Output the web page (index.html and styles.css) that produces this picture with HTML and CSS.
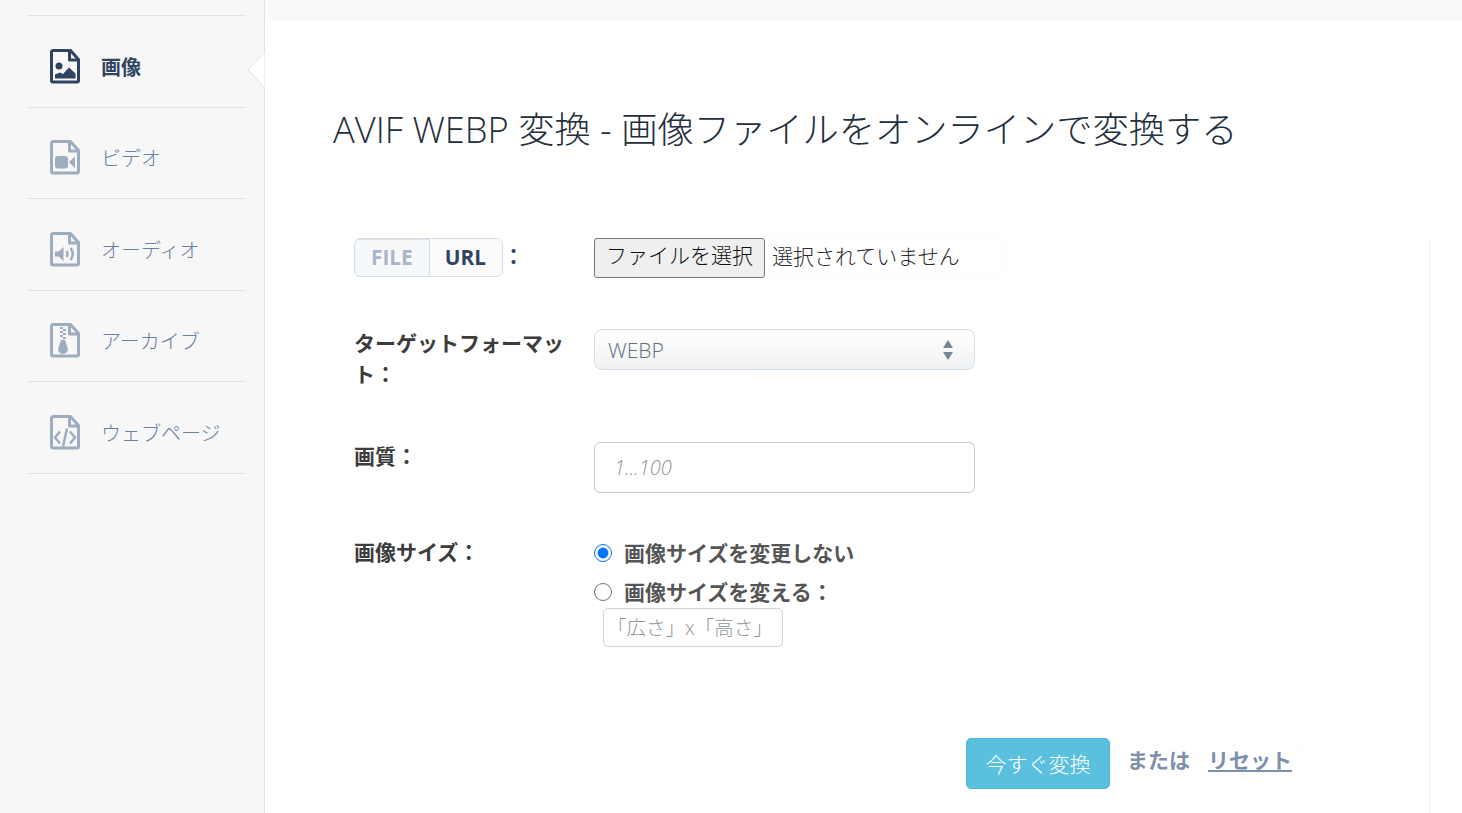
FILE: index.html
```html
<!DOCTYPE html>
<html lang="ja">
<head>
    <meta charset="UTF-8">
    <title>AVIF WEBP 変換</title>
    <link rel="stylesheet" href="styles.css">
</head>
<body>
    <aside class="sidebar">
        <nav class="side-nav">
            <a class="nav-item active" href="#">
                <svg class="nav-icon" viewBox="0 0 30 35">
                    <path class="doc" d="M1.500 3a1.500 1.500 0 0 1 1.500-1.500h17.500l8 9v21a1.500 1.500 0 0 1-1.500 1.500H3a1.500 1.500 0 0 1-1.500-1.500z"/>
                    <path class="fold" d="M19.500 1.500v9.500h9"/>
                    <circle class="fill" cx="9" cy="17" r="3.500"/>
                    <path class="fill" d="M5 29.500v-4l5-2 3 1.500 6-6.500 6.500 6v5z"/>
                </svg>
                <span>画像</span>
                <svg class="nav-notch" viewBox="0 0 18 36">
                    <path d="M18 0L1 18l17 18z"/>
                </svg>
            </a>
            <a class="nav-item" href="#">
                <svg class="nav-icon" viewBox="0 0 30 35">
                    <path class="doc" d="M1.500 3a1.500 1.500 0 0 1 1.500-1.500h17.500l8 9v21a1.500 1.500 0 0 1-1.500 1.500H3a1.500 1.500 0 0 1-1.500-1.500z"/>
                    <path class="fold" d="M19.500 1.500v9.500h9"/>
                    <rect class="fill" x="5" y="16" width="13" height="12.500" rx="3"/>
                    <path class="fill" d="M19 22l6-5.500v12z"/>
                </svg>
                <span>ビデオ</span>
            </a>
            <a class="nav-item" href="#">
                <svg class="nav-icon" viewBox="0 0 30 35">
                    <path class="doc" d="M1.500 3a1.500 1.500 0 0 1 1.500-1.500h17.500l8 9v21a1.500 1.500 0 0 1-1.500 1.500H3a1.500 1.500 0 0 1-1.500-1.500z"/>
                    <path class="fold" d="M19.500 1.500v9.500h9"/>
                    <path class="fill" d="M5 19.500h3.500l5-4.500v14l-5-4.500H5z"/>
                    <path class="wave" d="M16.500 19q2 3 0 6M20.500 16q4.500 6 0 12"/>
                </svg>
                <span>オーディオ</span>
            </a>
            <a class="nav-item" href="#">
                <svg class="nav-icon" viewBox="0 0 30 35">
                    <path class="doc" d="M1.500 3a1.500 1.500 0 0 1 1.500-1.500h17.500l8 9v21a1.500 1.500 0 0 1-1.500 1.500H3a1.500 1.500 0 0 1-1.500-1.500z"/>
                    <path class="fold" d="M19.500 1.500v9.500h9"/>
                    <path class="fill" d="M10 4h3v2h-3zM13 6h3v2h-3zM10 8h3v2h-3zM13 10h3v2h-3zM10 12h3v2h-3zM13 14h3v2h-3zM11 17h4l3 9a5 5 0 1 1-10 0z"/>
                </svg>
                <span>アーカイブ</span>
            </a>
            <a class="nav-item" href="#">
                <svg class="nav-icon" viewBox="0 0 30 35">
                    <path class="doc" d="M1.500 3a1.500 1.500 0 0 1 1.500-1.500h17.500l8 9v21a1.500 1.500 0 0 1-1.500 1.500H3a1.500 1.500 0 0 1-1.500-1.500z"/>
                    <path class="fold" d="M19.500 1.500v9.500h9"/>
                    <path class="wave" d="M10 16.500l-5 6 5 6M20 16.500l5 6-5 6M17 13.500l-4 18"/>
                </svg>
                <span>ウェブページ</span>
            </a>
        </nav>
    </aside>

    <main class="main">
        <div class="top-strip"></div>
        <h1 class="page-title">AVIF WEBP 変換 - 画像ファイルをオンラインで変換する</h1>

        <form class="convert-form">
            <div class="form-row row-file">
                <div class="form-label source-label">
                    <div class="source-tabs">
                        <span class="source-tab tab-file">FILE</span>
                        <span class="source-tab tab-url">URL</span>
                    </div>
                    <span class="source-colon">：</span>
                </div>
                <div class="file-box">
                    <button type="button" class="file-button">ファイルを選択</button>
                    <span class="file-name">選択されていません</span>
                </div>
            </div>

            <div class="form-row row-format">
                <label class="form-label">ターゲットフォーマット：</label>
                <div class="select-wrap">
                    <select class="format-select">
                        <option>WEBP</option>
                    </select>
                    <svg class="select-arrows" viewBox="0 0 10 20">
                        <path d="M5 0l5 8H0zM0 12h10l-5 8z"/>
                    </svg>
                </div>
            </div>

            <div class="form-row row-quality">
                <label class="form-label">画質：</label>
                <input class="quality-input" type="text" placeholder="1...100">
            </div>

            <div class="form-row row-size">
                <label class="form-label">画像サイズ：</label>
                <div class="size-options">
                    <label class="radio-line"><input type="radio" name="size" checked>画像サイズを変更しない</label>
                    <label class="radio-line"><input type="radio" name="size">画像サイズを変える：</label>
                    <input class="size-input" type="text" placeholder="「広さ」x「高さ」">
                </div>
            </div>

            <div class="form-actions">
                <button type="button" class="convert-button">今すぐ変換</button>
                <span class="or-text">または</span>
                <a class="reset-link" href="#">リセット</a>
            </div>
        </form>
    </main>
</body>
</html>
```

FILE: styles.css
```css
html, body {
    height: 100%;
}

body {
    margin: 0;
    height: 813px;
    overflow: hidden;
    display: flex;
    background: #ffffff;
    font-family: "Open Sans", "Noto Sans CJK JP", sans-serif;
    color: #333333;
}

.sidebar {
    box-sizing: border-box;
    width: 265px;
    flex-shrink: 0;
    background: #f7f7f8;
    border-right: 1px solid #dbe4ec;
    padding: 15px 18px 0 28px;
}

.side-nav {
    border-top: 1px solid #dde3ec;
}

.nav-item {
    position: relative;
    box-sizing: border-box;
    height: 91.500px;
    display: flex;
    align-items: center;
    gap: 21px;
    padding: 10px 0 0 22px;
    border-bottom: 1px solid #dde3ec;
    font-size: 20px;
    font-weight: 300;
    color: #67809f;
    text-decoration: none;
}

.nav-item.active {
    font-weight: 700;
    color: #2f4460;
}

/* white notch pointing into the sidebar */
.nav-notch {
    position: absolute;
    right: -19px;
    top: 36px;
    width: 18px;
    height: 36px;
    fill: #ffffff;
    stroke: #dbe4ec;
    stroke-width: 1;
}

.nav-icon {
    width: 30px;
    height: 35px;
    flex-shrink: 0;
    color: #9eacc0;
}

.active .nav-icon {
    color: #2f4460;
}

.nav-icon .doc, .nav-icon .fold {
    fill: none;
    stroke: currentColor;
    stroke-width: 3;
    stroke-linejoin: round;
}

.nav-icon .fill {
    fill: currentColor;
}

.nav-icon .wave {
    fill: none;
    stroke: currentColor;
    stroke-width: 2.500;
}

.main {
    position: relative;
    flex: 1;
    padding-left: 68px;
    min-width: 0;
}

.top-strip {
    position: absolute;
    top: 0;
    left: 0;
    right: 0;
    height: 21px;
    background: linear-gradient(to right, #fcfcfc, #f9f9f9 6px);
}

.page-title {
    margin: 0;
    padding-top: 104px;
    font-size: 36.250px;
    line-height: 50px;
    font-weight: 300;
    color: #232f3c;
    white-space: nowrap;
}

.convert-form {
    box-sizing: border-box;
    margin-top: 84px;
    margin-right: 32px;
    padding-left: 21px;
    height: 575px;
    border-right: 1px solid #eeeeee;
}

.form-row {
    display: grid;
    grid-template-columns: 240px 1fr;
}

.row-file {
    height: 91px;
}

.row-format {
    height: 113px;
}

.row-quality {
    height: 97px;
}

.row-size {
    height: 199px;
}

.form-label {
    font-size: 21px;
    font-weight: 700;
    line-height: 31px;
    color: #3c3c3c;
}

.row-format .form-label, .row-quality .form-label {
    width: 215px;
    margin-top: -1px;
}

.row-size .form-label {
    margin-top: -2px;
}

.source-label {
    display: flex;
    align-items: flex-start;
}

.source-tabs {
    box-sizing: border-box;
    display: flex;
    height: 39px;
    border: 1px solid #d2deea;
    border-radius: 6px;
    background: #f7f8f9;
    overflow: hidden;
}

.source-tab {
    padding: 0 15px;
    line-height: 37px;
    font-size: 20.800px;
    font-weight: 700;
}

.tab-file {
    color: #a8b6c9;
    border-right: 1px solid #d2deea;
    box-shadow: inset 0 1px 1px #dddddd;
    padding: 0 16px;
}

.tab-url {
    color: #2f4460;
    background: #fbfbfc;
    padding-right: 16px;
}

.source-colon {
    line-height: 36px;
    color: #2f4460;
}

.file-box {
    box-sizing: border-box;
    width: 409px;
    height: 40px;
    display: flex;
    align-items: center;
    border: 1px solid #fafafa;
    border-left: 0;
    border-radius: 3px;
}

.file-button {
    box-sizing: border-box;
    width: 171px;
    height: 40px;
    padding: 0 0 5px;
    margin-right: 7px;
    border: 1px solid #767676;
    border-radius: 3px;
    background: #efefef;
    font-family: inherit;
    font-size: 21px;
    font-weight: 300;
    line-height: 33px;
    color: #111111;
}

.file-name {
    font-size: 21px;
    font-weight: 300;
    line-height: 36px;
    margin-bottom: 4px;
    color: #2a2a2a;
}

.select-wrap {
    position: relative;
    width: 381px;
    height: 41px;
}

.format-select {
    box-sizing: border-box;
    width: 100%;
    height: 100%;
    padding: 1px 13px 0;
    appearance: none;
    border: 1px solid #d3dfeb;
    border-radius: 8px;
    background: linear-gradient(#ffffff, #f0f1f2);
    font-family: inherit;
    font-size: 21px;
    font-weight: 300;
    color: #5f6f80;
}

.select-arrows {
    position: absolute;
    right: 22px;
    top: 11px;
    width: 10px;
    height: 20px;
    fill: #76869a;
}

.quality-input {
    box-sizing: border-box;
    width: 381px;
    height: 51px;
    padding: 0 19px;
    border: 1px solid #c9c9c9;
    border-radius: 6px;
    font-family: inherit;
    font-size: 20px;
    font-style: italic;
    font-weight: 300;
}

.quality-input::placeholder, .size-input::placeholder {
    color: #8f959c;
    opacity: 1;
}

.size-options {
    display: flex;
    flex-direction: column;
    align-items: flex-start;
    margin-top: -5px;
}

.radio-line {
    box-sizing: border-box;
    display: flex;
    align-items: center;
    height: 38.500px;
    padding-bottom: 2px;
    font-size: 21px;
    font-weight: 700;
    color: #555555;
}

.radio-line input {
    width: 18px;
    height: 18px;
    margin: 2px 12px 0 0;
}

.size-input {
    box-sizing: border-box;
    width: 180px;
    height: 39px;
    margin: -3px 0 0 9px;
    padding: 0 3px;
    border: 1px solid #cfd2d6;
    border-radius: 5px;
    font-family: inherit;
    font-size: 19.500px;
    font-weight: 300;
}

.form-actions {
    display: flex;
    align-items: flex-start;
    padding-left: 612px;
}

.convert-button {
    box-sizing: border-box;
    width: 144px;
    height: 51px;
    padding: 0 0 2px;
    margin-right: 17px;
    border: 1px solid #52b6d9;
    border-radius: 5px;
    background: #5bc0de;
    font-family: inherit;
    font-size: 21px;
    font-weight: 300;
    color: #ffffff;
}

.or-text {
    font-size: 21px;
    font-weight: 700;
    line-height: 44px;
    color: #7d91ab;
}

.reset-link {
    margin: 6px 0 0 9px;
    padding: 0 8px;
    border: 1px solid #fbfbfb;
    font-size: 21px;
    font-weight: 700;
    line-height: 31px;
    color: #7d91ab;
}
```
